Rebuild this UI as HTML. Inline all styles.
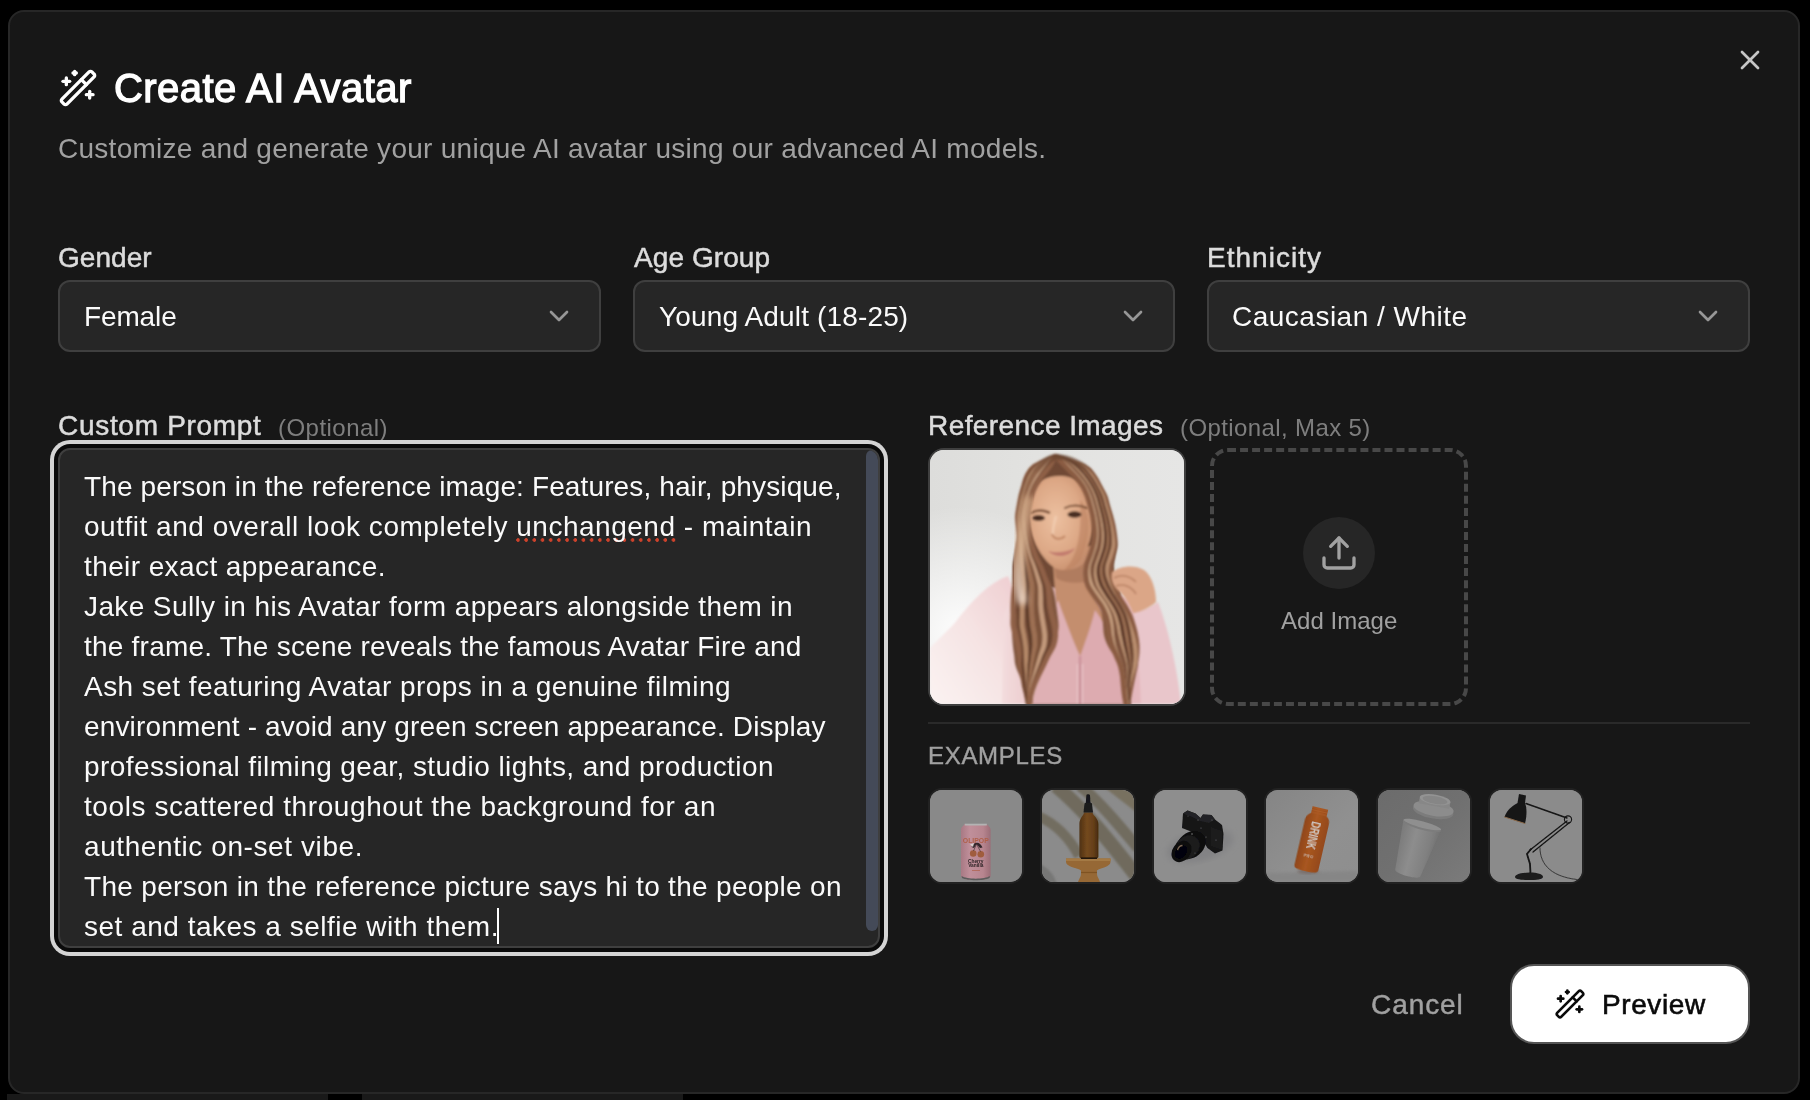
<!DOCTYPE html>
<html lang="en">
<head>
<meta charset="utf-8">
<title>Create AI Avatar</title>
<style>
*{box-sizing:border-box;margin:0;padding:0}
html,body{width:1810px;height:1100px;overflow:hidden;background:#000}
body{position:relative;font-family:"Liberation Sans",sans-serif;color:#fafafa;-webkit-font-smoothing:antialiased}
.abs{position:absolute}
.t{position:absolute;white-space:pre;line-height:40px;font-size:28px;will-change:transform}
.bgstrip{position:absolute;background:#191919}
#modal{position:absolute;left:8px;top:10px;width:1792px;height:1084px;background:#171717;border:2px solid #272727;border-radius:16px}
.title{left:114px;top:64px;font-size:40px;line-height:48px;font-weight:400;letter-spacing:0.45px;color:#fff;-webkit-text-stroke:1.3px #fff}
.sub{left:58px;top:129px;color:#a1a1a1;letter-spacing:0.272px}
.lbl{color:#dcdcdc;-webkit-text-stroke:0.5px #dcdcdc}
.opt{font-size:24px;line-height:32px;color:#7e7e7e}
.sel{position:absolute;top:280px;width:543px;height:72px;background:#262626;border:2px solid #3f3f3f;border-radius:12px}
.sel .t{left:24px;top:15px;color:#fafafa}
.sel svg{position:absolute;right:24px;top:18px;width:32px;height:32px}
#ta{position:absolute;left:58px;top:448px;width:822px;height:500px;background:#262626;border:2px solid #3f3f3f;border-radius:12px;box-shadow:0 0 0 4px #0a0a0a,0 0 0 8px #d4d4d4;overflow:hidden}
#ta .t{left:24px;color:#fafafa}
#thumb{position:absolute;left:806px;top:0;width:12px;height:481px;border-radius:6px;background:#444a58}
#spell{position:absolute;left:456px;top:88px;width:160px;height:4px;background:radial-gradient(circle at 2px 2px,#cf422b 1.5px,rgba(207,66,43,0) 2.1px) 0 0/8.2px 4px repeat-x}
#caret{position:absolute;left:437px;top:458px;width:2px;height:36px;background:#fff}
#photo{position:absolute;left:928px;top:448px;width:258px;height:258px;border:2px solid #3f3f3f;border-radius:16px;overflow:hidden;background:#e3e3e1}
#add{position:absolute;left:1210px;top:448px;width:258px;height:258px;border:4px dashed #484848;border-radius:18px}
#circ{position:absolute;left:1303px;top:517px;width:72px;height:72px;border-radius:50%;background:#262626}
#sep{position:absolute;left:928px;top:722px;width:822px;height:2px;background:#2a2a2a}
.ex{position:absolute;top:788px;width:96px;height:96px;border:2px solid #222;border-radius:14px;overflow:hidden;background:#8b8b8b}
.ex svg{display:block;width:92px;height:92px}
#prev{position:absolute;left:1510px;top:964px;width:240px;height:80px;background:#fff;border:2px solid #555;border-radius:24px}
</style>
</head>
<body>
<!-- faint page behind the dialog -->
<div class="bgstrip" style="left:7px;top:1094px;width:321px;height:6px"></div>
<div class="bgstrip" style="left:362px;top:1094px;width:321px;height:6px"></div>

<div id="modal"></div>

<!-- header -->
<svg class="abs" style="left:58px;top:68px;width:40px;height:40px" viewBox="0 0 24 24" fill="none" stroke="#fff" stroke-width="2" stroke-linecap="round" stroke-linejoin="round"><path d="m21.64 3.64-1.28-1.28a1.21 1.21 0 0 0-1.72 0L2.36 18.64a1.21 1.21 0 0 0 0 1.72l1.28 1.28a1.2 1.2 0 0 0 1.72 0L21.64 5.36a1.2 1.2 0 0 0 0-1.72"/><path d="m14 7 3 3"/><path d="M5 6v4"/><path d="M19 14v4"/><path d="M10 2v2"/><path d="M7 8H3"/><path d="M21 16h-4"/><path d="M11 3H9"/></svg>
<div class="t title">Create AI Avatar</div>
<div class="t sub">Customize and generate your unique AI avatar using our advanced AI models.</div>
<svg class="abs" style="left:1734px;top:44px;width:32px;height:32px" viewBox="0 0 24 24" fill="none" stroke="#c6c6c6" stroke-width="2" stroke-linecap="round" stroke-linejoin="round"><path d="M18 6 6 18"/><path d="m6 6 12 12"/></svg>

<!-- row 1 -->
<div class="t lbl" style="left:58px;top:238px;letter-spacing:0.04px">Gender</div>
<div class="t lbl" style="left:634px;top:238px;letter-spacing:0.08px">Age Group</div>
<div class="t lbl" style="left:1207px;top:238px;letter-spacing:1.02px">Ethnicity</div>

<div class="sel" style="left:58px"><div class="t" style="letter-spacing:-0.13px">Female</div><svg viewBox="0 0 24 24" fill="none" stroke="#979797" stroke-width="2" stroke-linecap="round" stroke-linejoin="round"><path d="m6 9 6 6 6-6"/></svg></div>
<div class="sel" style="left:633px;width:542px"><div class="t" style="letter-spacing:0.15px">Young Adult (18-25)</div><svg viewBox="0 0 24 24" fill="none" stroke="#979797" stroke-width="2" stroke-linecap="round" stroke-linejoin="round"><path d="m6 9 6 6 6-6"/></svg></div>
<div class="sel" style="left:1207px"><div class="t" style="letter-spacing:0.49px;margin-left:-1px">Caucasian / White</div><svg viewBox="0 0 24 24" fill="none" stroke="#979797" stroke-width="2" stroke-linecap="round" stroke-linejoin="round"><path d="m6 9 6 6 6-6"/></svg></div>

<!-- row 2 labels -->
<div class="t lbl" style="left:58px;top:406px;letter-spacing:0.7px">Custom Prompt</div>
<div class="t opt" style="left:277.5px;top:412px;letter-spacing:0.47px">(Optional)</div>
<div class="t lbl" style="left:928px;top:406px;letter-spacing:0.42px">Reference Images</div>
<div class="t opt" style="left:1179.5px;top:412px;letter-spacing:0.39px">(Optional, Max 5)</div>

<!-- textarea -->
<div id="ta">
<div id="spell"></div>
<div class="t" style="top:17px;letter-spacing:0.124px">The person in the reference image: Features, hair, physique,</div>
<div class="t" style="top:57px;letter-spacing:0.520px">outfit and overall look completely unchangend - maintain</div>
<div class="t" style="top:97px;letter-spacing:0.400px">their exact appearance.</div>
<div class="t" style="top:137px;letter-spacing:0.390px">Jake Sully in his Avatar form appears alongside them in</div>
<div class="t" style="top:177px;letter-spacing:0.220px">the frame. The scene reveals the famous Avatar Fire and</div>
<div class="t" style="top:217px;letter-spacing:0.457px">Ash set featuring Avatar props in a genuine filming</div>
<div class="t" style="top:257px;letter-spacing:0.153px">environment - avoid any green screen appearance. Display</div>
<div class="t" style="top:297px;letter-spacing:0.424px">professional filming gear, studio lights, and production</div>
<div class="t" style="top:337px;letter-spacing:0.586px">tools scattered throughout the background for an</div>
<div class="t" style="top:377px;letter-spacing:0.587px">authentic on-set vibe.</div>
<div class="t" style="top:417px;letter-spacing:0.308px">The person in the reference picture says hi to the people on</div>
<div class="t" style="top:457px;letter-spacing:0.50px">set and takes a selfie with them.</div>
<div id="caret"></div>
<div id="thumb"></div>
</div>

<!-- reference images -->
<div id="photo"><svg width="254" height="254" viewBox="0 0 254 254" style="display:block">
<defs>
<linearGradient id="pbg" x1="0" y1="0" x2="1" y2="0"><stop offset="0" stop-color="#dddddb"/><stop offset="0.5" stop-color="#e3e3e1"/><stop offset="1" stop-color="#e6e6e5"/></linearGradient>
<radialGradient id="pglow" cx="0.12" cy="0.72" r="0.5"><stop offset="0" stop-color="#fff" stop-opacity="0.95"/><stop offset="1" stop-color="#fff" stop-opacity="0"/></radialGradient>
<radialGradient id="pface" cx="0.42" cy="0.45" r="0.65"><stop offset="0" stop-color="#ecc0a0"/><stop offset="0.6" stop-color="#dda886"/><stop offset="1" stop-color="#c38b69"/></radialGradient>
<linearGradient id="parm" x1="1" y1="0" x2="0" y2="1"><stop offset="0" stop-color="#efcdd0"/><stop offset="0.45" stop-color="#f5e2e2"/><stop offset="1" stop-color="#fbf3f2"/></linearGradient>
<linearGradient id="pbody" x1="0" y1="0" x2="1" y2="0"><stop offset="0" stop-color="#f3dcdd"/><stop offset="0.5" stop-color="#dfadb1"/><stop offset="1" stop-color="#e6bcc2"/></linearGradient>
<linearGradient id="ptop" x1="0" y1="0" x2="0" y2="1"><stop offset="0" stop-color="#5e3c29" stop-opacity="0.75"/><stop offset="0.3" stop-color="#5e3c29" stop-opacity="0"/></linearGradient>
<filter id="pblur" x="-5%" y="-5%" width="110%" height="110%"><feGaussianBlur stdDeviation="0.9"/></filter>
<linearGradient id="phl" gradientUnits="userSpaceOnUse" x1="0" y1="45" x2="0" y2="155"><stop offset="0" stop-color="#cfa582"/><stop offset="0.5" stop-color="#e2bf9f"/><stop offset="1" stop-color="#f4e2d6"/></linearGradient><filter id="pblur3" x="-50%" y="-10%" width="200%" height="120%"><feGaussianBlur stdDeviation="3"/></filter><filter id="pblur2" x="-5%" y="-5%" width="110%" height="110%"><feGaussianBlur stdDeviation="0.9"/></filter>
</defs>
<rect width="254" height="254" fill="url(#pbg)"/>
<rect width="254" height="254" fill="url(#pglow)"/>
<g filter="url(#pblur)">
<path d="M78 126 C60 132 42 150 24 174 L0 198 L0 254 L84 254 L84 200 L88 150 Z" fill="url(#parm)"/>
<path d="M125 6.5 C121.4 8.2 108.2 13.1 103.3 16.4 C98.5 19.8 97.6 23.1 95.9 26.4 C94.1 29.7 93.9 33 93 36.3 C92.1 39.6 91 42.9 90.3 46.3 C89.5 49.6 89.1 52.9 88.5 56.2 C88 59.5 87.2 62.8 87.1 66.1 C86.9 69.5 87.4 72.8 87.6 76.1 C87.7 79.4 88.1 82.7 87.8 86 C87.6 89.3 86.7 92.6 86.1 96 C85.6 99.3 85 102.6 84.5 105.9 C84 109.2 83.3 112.5 83.1 115.8 C82.9 119.2 83 122.5 83.2 125.8 C83.5 129.1 84.2 132.4 84.5 135.7 C84.7 139 84.8 142.3 84.9 145.7 C84.9 149 84.8 152.3 84.6 155.6 C84.5 158.9 84.3 162.2 83.8 165.5 C83.3 168.9 82.1 172.2 81.8 175.5 C81.6 178.8 82 182.1 82.1 185.4 C82.3 188.7 82.6 192 82.9 195.4 C83.2 198.7 83.7 202 84.2 205.3 C84.6 208.6 84.6 211.9 85.5 215.2 C86.3 218.6 88 221.9 89.3 225.2 C90.6 228.5 91.8 231.8 93.3 235.1 C94.8 238.4 96.9 241.7 98.4 245.1 C99.8 248.4 101.4 253.3 102 255 L200 255 C200.3 253.3 201.2 248.4 201.8 245.1 C202.4 241.7 203 238.4 203.7 235.1 C204.3 231.8 205 228.5 205.7 225.2 C206.3 221.9 207.4 218.6 207.8 215.2 C208.1 211.9 208 208.6 207.8 205.3 C207.5 202 206.8 198.7 206.2 195.4 C205.5 192 204.5 188.7 203.7 185.4 C202.8 182.1 201.7 178.8 200.8 175.5 C199.9 172.2 199.3 168.9 198.4 165.5 C197.4 162.2 196.2 158.9 195 155.6 C193.8 152.3 192.2 149 191.1 145.7 C189.9 142.3 189.2 139 188.1 135.7 C187.1 132.4 185.5 129.1 184.7 125.8 C183.9 122.5 183.3 119.2 183.3 115.8 C183.4 112.5 184.5 109.2 185 105.9 C185.6 102.6 186.4 99.3 186.4 96 C186.4 92.6 185.5 89.3 185.1 86 C184.6 82.7 184.1 79.4 183.5 76.1 C182.9 72.8 182.2 69.5 181.4 66.1 C180.6 62.8 179.6 59.5 178.6 56.2 C177.7 52.9 177.2 49.6 175.9 46.3 C174.5 42.9 172.5 39.6 170.7 36.3 C168.9 33 167.7 29.7 165.2 26.4 C162.6 23.1 162 19.8 155.5 16.4 C149 13.1 131.1 8.2 126.2 6.5 Z" fill="#6f4934"/>
<path d="M72 254 L74 165 C80 142 100 136 125 138 L175 140 C198 145 212 158 220 172 L230 254 Z" fill="url(#pbody)"/>
<path d="M203 163 C212 160 222 156 228 152 C237 175 247 215 251 254 L211 254 C210 220 206 190 203 163 Z" fill="#e9c6cb"/>
<path d="M122 100 L162 96 L166 150 L176 168 L150 206 L126 156 Z" fill="#c48e6e"/><path d="M124 112 C134 124 150 122 162 104 L164 130 C150 134 136 134 126 128 Z" fill="#b07c5e"/>
<path d="M128 150 C134 167 143 190 150 207 L150 254 L100 254 C108 230 120 200 118 172 Z" fill="#dfb0b4"/>
<path d="M165 160 C161 177 154 195 150 207 L150 254 L200 254 C194 230 186 200 180 182 Z" fill="#ddabb0"/>
<path d="M150 206 L150 254" stroke="#c98f98" stroke-width="2.200" fill="none"/>
<path d="M147.500 214 L147.500 254 M152.500 214 L152.500 254" stroke="#ecc9cc" stroke-width="1" fill="none"/>
<path d="M100 46 C104 31 118 25 132 26 C150 27 162 40 163 62 C164 80 160 96 151 109 C144 119 134 122 127 119 C116 114 104 96 100 78 C98 66 98 56 100 46 Z" fill="url(#pface)"/>
<path d="M150 50 C160 60 162 84 151 109 C146 116 140 120 134 120 C148 108 152 80 150 50 Z" fill="#b97f5e" opacity="0.55"/><path d="M126 66 C124 74 122 80 123 86" stroke="#f3cfb4" stroke-width="2.400" fill="none" opacity="0.8"/>
<path d="M101 63 C106 60 113 60 119 62.500" stroke="#7a5137" stroke-width="2.600" fill="none" stroke-linecap="round"/>
<path d="M135 58 C141 54.500 150 54.500 157 58" stroke="#7a5137" stroke-width="2" fill="none" stroke-linecap="round"/>
<ellipse cx="108.500" cy="68" rx="6.500" ry="3" fill="#4a2e20"/>
<ellipse cx="144.500" cy="64.500" rx="7" ry="3.200" fill="#4a2e20"/>
<path d="M122 84 C124 90 131 90 135 86" stroke="#c08562" stroke-width="2" fill="none"/>
<path d="M118 101 C125 103.500 136 102.500 145 98 C140 107 126 109 118 101 Z" fill="#c27c6e"/>
</g>
<g filter="url(#pblur2)">
<path d="M125 6.5 C121.4 8.2 108.2 13.1 103.3 16.4 C98.5 19.8 97.6 23.1 95.9 26.4 C94.1 29.7 93.9 33 93 36.3 C92.1 39.6 91 42.9 90.3 46.3 C89.5 49.6 89.1 52.9 88.5 56.2 C88 59.5 87.2 62.8 87.1 66.1 C86.9 69.5 87.4 72.8 87.6 76.1 C87.7 79.4 88.1 82.7 87.8 86 C87.6 89.3 86.7 92.6 86.1 96 C85.6 99.3 85 102.6 84.5 105.9 C84 109.2 83.3 112.5 83.1 115.8 C82.9 119.2 83 122.5 83.2 125.8 C83.5 129.1 84.2 132.4 84.5 135.7 C84.7 139 84.8 142.3 84.9 145.7 C84.9 149 84.8 152.3 84.6 155.6 C84.5 158.9 84.3 162.2 83.8 165.5 C83.3 168.9 82.1 172.2 81.8 175.5 C81.6 178.8 82 182.1 82.1 185.4 C82.3 188.7 82.6 192 82.9 195.4 C83.2 198.7 83.7 202 84.2 205.3 C84.6 208.6 84.6 211.9 85.5 215.2 C86.3 218.6 88 221.9 89.3 225.2 C90.6 228.5 91.8 231.8 93.3 235.1 C94.8 238.4 96.9 241.7 98.4 245.1 C99.8 248.4 101.4 253.3 102 255 L102.5 255 C102.6 253.3 102.7 248.4 103 245.1 C103.3 241.7 103.7 238.4 104.4 235.1 C105.1 231.8 105.9 228.5 107 225.2 C108.1 221.9 109.6 218.6 111.1 215.2 C112.6 211.9 114 208.6 116 205.3 C118 202 121.2 198.7 123 195.4 C124.9 192 126.4 188.7 127.3 185.4 C128.2 182.1 128.5 178.8 128.6 175.5 C128.6 172.2 128 168.9 127.6 165.5 C127.2 162.2 126.7 158.9 126.2 155.6 C125.7 152.3 125.5 149 124.7 145.7 C124 142.3 123.3 139 121.8 135.7 C120.3 132.4 117.9 129.1 115.9 125.8 C114 122.5 112 119.2 110.1 115.8 C108.2 112.5 105.9 109.2 104.4 105.9 C103 102.6 102.1 99.3 101.2 96 C100.3 92.6 99.6 89.3 99.2 86 C98.8 82.7 98.7 79.4 98.6 76.1 C98.4 72.8 97.9 69.5 98.1 66.1 C98.2 62.8 98.8 59.5 99.5 56.2 C100.1 52.9 100.9 49.6 102 46.3 C103.1 42.9 104.2 39.6 106 36.3 C107.7 33 110.2 29.7 112.6 26.4 C115 23.1 118.4 19.8 120.5 16.4 C122.5 13.1 124.2 8.2 125 6.5 Z" fill="#805640"/>
<path d="M125 6.5 C121.5 8.2 109 13.1 104.3 16.4 C99.6 19.8 98.5 23.1 96.8 26.4 C95 29.7 94.7 33 93.7 36.3 C92.7 39.6 91.7 42.9 90.9 46.3 C90.2 49.6 89.7 52.9 89.1 56.2 C88.6 59.5 87.7 62.8 87.6 66.1 C87.4 69.5 88.1 72.8 88.4 76.1 C88.7 79.4 89.4 82.7 89.5 86 C89.6 89.3 89.1 92.6 88.8 96 C88.6 99.3 88.3 102.6 87.9 105.9 C87.5 109.2 86.8 112.5 86.3 115.8 C85.9 119.2 85.5 122.5 85.2 125.8 C84.9 129.1 84.8 132.4 84.6 135.7 C84.3 139 83.8 142.3 83.5 145.7 C83.3 149 83 152.3 83 155.6 C82.9 158.9 83 162.2 83.1 165.5 C83.1 168.9 82.7 172.2 83.1 175.5 C83.5 178.8 84.7 182.1 85.5 185.4 C86.3 188.7 87.2 192 88 195.4 C88.7 198.7 89.4 202 89.8 205.3 C90.3 208.6 90.2 211.9 90.6 215.2 C91.1 218.6 92.1 221.9 92.7 225.2 C93.3 228.5 93.6 231.8 94.3 235.1 C94.9 238.4 96.1 241.7 96.8 245.1 C97.5 248.4 98.3 253.3 98.6 255" stroke="#8f6046" stroke-width="5" fill="none" stroke-linecap="round"/>
<path d="M125 6.5 C121.9 8.2 110.6 13.1 106.2 16.4 C101.8 19.8 100.5 23.1 98.6 26.4 C96.8 29.7 96.2 33 95.2 36.3 C94.1 39.6 93 42.9 92.2 46.3 C91.4 49.6 90.9 52.9 90.4 56.2 C89.8 59.5 89 62.8 88.9 66.1 C88.8 69.5 89.5 72.8 89.8 76.1 C90.2 79.4 90.9 82.7 91 86 C91.1 89.3 90.7 92.6 90.5 96 C90.3 99.3 90.1 102.6 89.7 105.9 C89.4 109.2 88.8 112.5 88.5 115.8 C88.2 119.2 87.9 122.5 87.8 125.8 C87.7 129.1 87.8 132.4 87.8 135.7 C87.7 139 87.6 142.3 87.6 145.7 C87.6 149 87.7 152.3 87.9 155.6 C88.1 158.9 88.5 162.2 88.8 165.5 C89.1 168.9 89 172.2 89.4 175.5 C89.9 178.8 91 182.1 91.7 185.4 C92.3 188.7 92.8 192 93.1 195.4 C93.4 198.7 93.5 202 93.5 205.3 C93.4 208.6 92.9 211.9 92.9 215.2 C92.9 218.6 93.4 221.9 93.6 225.2 C93.9 228.5 93.8 231.8 94.3 235.1 C94.7 238.4 95.7 241.7 96.3 245.1 C97 248.4 97.9 253.3 98.2 255" stroke="#6e4733" stroke-width="4" fill="none" stroke-linecap="round"/>
<path d="M125 6.5 C122.2 8.2 112.2 13.1 108.1 16.4 C104 19.8 102.4 23.1 100.5 26.4 C98.6 29.7 97.8 33 96.6 36.3 C95.4 39.6 94.4 42.9 93.5 46.3 C92.7 49.6 92.2 52.9 91.6 56.2 C91 59.5 90.1 62.8 89.9 66.1 C89.7 69.5 90.2 72.8 90.5 76.1 C90.7 79.4 91.3 82.7 91.5 86 C91.8 89.3 91.7 92.6 91.9 96 C92.1 99.3 92.3 102.6 92.5 105.9 C92.7 109.2 92.9 112.5 93.2 115.8 C93.4 119.2 93.7 122.5 93.9 125.8 C94.1 129.1 94.5 132.4 94.4 135.7 C94.4 139 93.8 142.3 93.5 145.7 C93.1 149 92.6 152.3 92.4 155.6 C92.2 158.9 92.1 162.2 92.1 165.5 C92 168.9 91.8 172.2 92.1 175.5 C92.4 178.8 93.3 182.1 93.9 185.4 C94.5 188.7 95.1 192 95.5 195.4 C95.9 198.7 96 202 96.2 205.3 C96.4 208.6 96.3 211.9 96.6 215.2 C96.8 218.6 97.5 221.9 97.7 225.2 C98 228.5 98 231.8 98.3 235.1 C98.6 238.4 99.2 241.7 99.4 245.1 C99.6 248.4 99.7 253.3 99.8 255" stroke="#b48868" stroke-width="4.5" fill="none" stroke-linecap="round"/>
<path d="M125 6.5 C122.5 8.2 113.8 13.1 110 16.4 C106.2 19.8 104.4 23.1 102.4 26.4 C100.4 29.7 99.3 33 98 36.3 C96.8 39.6 95.7 42.9 94.8 46.3 C94 49.6 93.4 52.9 92.8 56.2 C92.2 59.5 91.3 62.8 91.2 66.1 C91.1 69.5 91.6 72.8 91.9 76.1 C92.3 79.4 92.8 82.7 93.2 86 C93.5 89.3 93.6 92.6 93.8 96 C94.1 99.3 94.3 102.6 94.6 105.9 C94.9 109.2 95.3 112.5 95.6 115.8 C95.9 119.2 96.2 122.5 96.5 125.8 C96.8 129.1 97.3 132.4 97.4 135.7 C97.5 139 97.2 142.3 97.1 145.7 C97 149 96.7 152.3 96.8 155.6 C96.9 158.9 97.2 162.2 97.4 165.5 C97.6 168.9 97.8 172.2 98.2 175.5 C98.7 178.8 99.6 182.1 100.1 185.4 C100.6 188.7 101 192 101 195.4 C101 198.7 100.6 202 100.3 205.3 C100 208.6 99.6 211.9 99.3 215.2 C99.1 218.6 99.1 221.9 99 225.2 C98.8 228.5 98.5 231.8 98.4 235.1 C98.4 238.4 98.7 241.7 98.7 245.1 C98.8 248.4 98.9 253.3 99 255" stroke="#5f3c2b" stroke-width="3.5" fill="none" stroke-linecap="round"/>
<path d="M125 6.5 C122.8 8.2 115.4 13.1 111.9 16.4 C108.4 19.8 106.3 23.1 104.2 26.4 C102.2 29.7 100.8 33 99.5 36.3 C98.1 39.6 97.1 42.9 96.1 46.3 C95.2 49.6 94.6 52.9 94 56.2 C93.4 59.5 92.5 62.8 92.4 66.1 C92.2 69.5 92.7 72.8 93 76.1 C93.3 79.4 93.8 82.7 94.2 86 C94.6 89.3 94.9 92.6 95.4 96 C95.8 99.3 96.3 102.6 96.9 105.9 C97.5 109.2 98.3 112.5 98.9 115.8 C99.5 119.2 100.1 122.5 100.7 125.8 C101.2 129.1 101.9 132.4 102.2 135.7 C102.4 139 102 142.3 101.9 145.7 C101.8 149 101.5 152.3 101.5 155.6 C101.5 158.9 101.8 162.2 102 165.5 C102.2 168.9 102.5 172.2 102.9 175.5 C103.3 178.8 104.2 182.1 104.5 185.4 C104.8 188.7 105.1 192 104.9 195.4 C104.8 198.7 104.1 202 103.6 205.3 C103.2 208.6 102.7 211.9 102.3 215.2 C101.9 218.6 101.7 221.9 101.4 225.2 C101 228.5 100.5 231.8 100.2 235.1 C100 238.4 100 241.7 99.9 245.1 C99.7 248.4 99.5 253.3 99.4 255" stroke="#9d6f52" stroke-width="5" fill="none" stroke-linecap="round"/>
<path d="M125 6.5 C123.1 8.2 117 13.1 113.8 16.4 C110.7 19.8 108.2 23.1 106.1 26.4 C103.9 29.7 102.4 33 100.9 36.3 C99.5 39.6 98.4 42.9 97.4 46.3 C96.5 49.6 95.9 52.9 95.2 56.2 C94.6 59.5 93.8 62.8 93.6 66.1 C93.4 69.5 93.9 72.8 94.2 76.1 C94.5 79.4 95 82.7 95.4 86 C95.9 89.3 96.4 92.6 97 96 C97.6 99.3 98.3 102.6 99.1 105.9 C100 109.2 101.1 112.5 102 115.8 C102.9 119.2 103.7 122.5 104.5 125.8 C105.2 129.1 106.2 132.4 106.5 135.7 C106.8 139 106.5 142.3 106.5 145.7 C106.4 149 106.1 152.3 106.1 155.6 C106.2 158.9 106.5 162.2 106.8 165.5 C107.1 168.9 107.5 172.2 107.9 175.5 C108.3 178.8 109.1 182.1 109.3 185.4 C109.5 188.7 109.6 192 109.2 195.4 C108.8 198.7 107.7 202 107 205.3 C106.4 208.6 105.7 211.9 105.1 215.2 C104.5 218.6 104 221.9 103.4 225.2 C102.9 228.5 102.2 231.8 101.7 235.1 C101.2 238.4 100.9 241.7 100.6 245.1 C100.3 248.4 99.8 253.3 99.6 255" stroke="#7c523b" stroke-width="4" fill="none" stroke-linecap="round"/>
<path d="M125 6.5 C123.5 8.2 118.6 13.1 115.7 16.4 C112.9 19.8 110.2 23.1 107.9 26.4 C105.7 29.7 103.9 33 102.4 36.3 C100.8 39.6 99.7 42.9 98.7 46.3 C97.8 49.6 97.1 52.9 96.4 56.2 C95.8 59.5 95 62.8 94.8 66.1 C94.7 69.5 95.2 72.8 95.5 76.1 C95.8 79.4 96.3 82.7 96.8 86 C97.4 89.3 98 92.6 98.8 96 C99.5 99.3 100.3 102.6 101.3 105.9 C102.3 109.2 103.8 112.5 104.8 115.8 C105.9 119.2 106.9 122.5 107.8 125.8 C108.7 129.1 109.8 132.4 110.3 135.7 C110.8 139 110.6 142.3 110.6 145.7 C110.7 149 110.5 152.3 110.7 155.6 C110.9 158.9 111.3 162.2 111.8 165.5 C112.2 168.9 112.9 172.2 113.4 175.5 C113.9 178.8 114.6 182.1 114.7 185.4 C114.8 188.7 114.7 192 114 195.4 C113.3 198.7 111.8 202 110.8 205.3 C109.8 208.6 108.9 211.9 108 215.2 C107 218.6 106.1 221.9 105.2 225.2 C104.3 228.5 103.3 231.8 102.6 235.1 C101.8 238.4 101.3 241.7 100.7 245.1 C100.2 248.4 99.7 253.3 99.4 255" stroke="#c39a7b" stroke-width="4.5" fill="none" stroke-linecap="round"/>
<path d="M125 6.5 C123.8 8.2 120.2 13.1 117.6 16.4 C115.1 19.8 112.1 23.1 109.8 26.4 C107.5 29.7 105.4 33 103.8 36.3 C102.2 39.6 101.1 42.9 100 46.3 C99 49.6 98.3 52.9 97.6 56.2 C97 59.5 96.2 62.8 96.1 66.1 C96 69.5 96.5 72.8 96.9 76.1 C97.2 79.4 97.6 82.7 98.3 86 C98.9 89.3 99.7 92.6 100.5 96 C101.4 99.3 102.3 102.6 103.4 105.9 C104.6 109.2 106.3 112.5 107.5 115.8 C108.8 119.2 109.8 122.5 110.9 125.8 C112 129.1 113.2 132.4 113.9 135.7 C114.5 139 114.5 142.3 114.7 145.7 C114.9 149 114.9 152.3 115.3 155.6 C115.6 158.9 116.3 162.2 117 165.5 C117.6 168.9 118.6 172.2 119.2 175.5 C119.7 178.8 120.4 182.1 120.3 185.4 C120.3 188.7 119.9 192 119 195.4 C118 198.7 115.9 202 114.5 205.3 C113.1 208.6 112 211.9 110.7 215.2 C109.4 218.6 108 221.9 106.7 225.2 C105.5 228.5 104.2 231.8 103.2 235.1 C102.2 238.4 101.3 241.7 100.7 245.1 C100 248.4 99.4 253.3 99.1 255" stroke="#6b4531" stroke-width="3.5" fill="none" stroke-linecap="round"/>
<path d="M125 6.5 C124.1 8.2 121.8 13.1 119.5 16.4 C117.3 19.8 114 23.1 111.7 26.4 C109.3 29.7 107 33 105.3 36.3 C103.5 39.6 102.4 42.9 101.3 46.3 C100.3 49.6 99.5 52.9 98.9 56.2 C98.2 59.5 97.5 62.8 97.3 66.1 C97.2 69.5 97.8 72.8 98.1 76.1 C98.5 79.4 98.9 82.7 99.6 86 C100.2 89.3 101.2 92.6 102.2 96 C103.2 99.3 104.3 102.6 105.6 105.9 C107 109.2 108.9 112.5 110.4 115.8 C111.8 119.2 113.1 122.5 114.3 125.8 C115.6 129.1 117 132.4 117.8 135.7 C118.6 139 118.7 142.3 119 145.7 C119.4 149 119.4 152.3 119.9 155.6 C120.4 158.9 121.2 162.2 121.9 165.5 C122.7 168.9 123.9 172.2 124.5 175.5 C125.1 178.8 125.7 182.1 125.6 185.4 C125.4 188.7 124.8 192 123.6 195.4 C122.3 198.7 119.8 202 118.1 205.3 C116.4 208.6 115.1 211.9 113.5 215.2 C111.9 218.6 110.1 221.9 108.5 225.2 C107 228.5 105.5 231.8 104.2 235.1 C102.9 238.4 101.8 241.7 101 245.1 C100.1 248.4 99.4 253.3 99 255" stroke="#8f6046" stroke-width="5" fill="none" stroke-linecap="round"/>
<path d="M126.2 6.5 C131.1 8.2 149 13.1 155.5 16.4 C162 19.8 162.6 23.1 165.2 26.4 C167.7 29.7 168.9 33 170.7 36.3 C172.5 39.6 174.5 42.9 175.9 46.3 C177.2 49.6 177.7 52.9 178.6 56.2 C179.6 59.5 180.6 62.8 181.4 66.1 C182.2 69.5 182.9 72.8 183.5 76.1 C184.1 79.4 184.6 82.7 185.1 86 C185.5 89.3 186.4 92.6 186.4 96 C186.4 99.3 185.6 102.6 185 105.9 C184.5 109.2 183.4 112.5 183.3 115.8 C183.3 119.2 183.9 122.5 184.7 125.8 C185.5 129.1 187.1 132.4 188.1 135.7 C189.2 139 189.9 142.3 191.1 145.7 C192.2 149 193.8 152.3 195 155.6 C196.2 158.9 197.4 162.2 198.4 165.5 C199.3 168.9 199.9 172.2 200.8 175.5 C201.7 178.8 202.8 182.1 203.7 185.4 C204.5 188.7 205.5 192 206.2 195.4 C206.8 198.7 207.5 202 207.8 205.3 C208 208.6 208.1 211.9 207.8 215.2 C207.4 218.6 206.3 221.9 205.7 225.2 C205 228.5 204.3 231.8 203.7 235.1 C203 238.4 202.4 241.7 201.8 245.1 C201.2 248.4 200.3 253.3 200 255 L198 255 C197.9 253.3 197.8 248.4 197.6 245.1 C197.5 241.7 197.4 238.4 196.9 235.1 C196.5 231.8 196 228.5 195 225.2 C194 221.9 192.7 218.6 190.8 215.2 C189 211.9 186.2 208.6 184 205.3 C181.8 202 179.4 198.7 177.8 195.4 C176.1 192 174.8 188.7 174.1 185.4 C173.3 182.1 173.4 178.8 173.1 175.5 C172.8 172.2 172.7 168.9 172.1 165.5 C171.5 162.2 170.6 158.9 169.4 155.6 C168.1 152.3 166.1 149 164.5 145.7 C163 142.3 161 139 159.9 135.7 C158.7 132.4 158.3 129.1 157.9 125.8 C157.5 122.5 157.3 119.2 157.5 115.8 C157.7 112.5 158.7 109.2 159.3 105.9 C160 102.6 160.8 99.3 161.3 96 C161.8 92.6 162.3 89.3 162.4 86 C162.5 82.7 162.3 79.4 162.2 76.1 C162 72.8 161.7 69.5 161.2 66.1 C160.7 62.8 160.1 59.5 159.2 56.2 C158.4 52.9 157.5 49.6 156.3 46.3 C155 42.9 153.8 39.6 151.7 36.3 C149.7 33 146.8 29.7 143.9 26.4 C140.9 23.1 137.1 19.8 134.2 16.4 C131.2 13.1 127.6 8.2 126.2 6.5 Z" fill="#84593f"/>
<path d="M126.2 6.5 C130.9 8.2 148 13.1 154.3 16.4 C160.6 19.8 161.4 23.1 164 26.4 C166.5 29.7 167.8 33 169.6 36.3 C171.4 39.6 173.4 42.9 174.8 46.3 C176.1 49.6 176.6 52.9 177.6 56.2 C178.5 59.5 179.7 62.8 180.6 66.1 C181.5 69.5 182.4 72.8 183.1 76.1 C183.7 79.4 184.3 82.7 184.6 86 C184.9 89.3 185.4 92.6 185 96 C184.7 99.3 183.3 102.6 182.4 105.9 C181.4 109.2 179.7 112.5 179.2 115.8 C178.8 119.2 179 122.5 179.7 125.8 C180.4 129.1 182 132.4 183.4 135.7 C184.8 139 186.4 142.3 188.3 145.7 C190.1 149 192.6 152.3 194.5 155.6 C196.4 158.9 198.3 162.2 199.8 165.5 C201.2 168.9 202.2 172.2 203.2 175.5 C204.2 178.8 205.1 182.1 205.7 185.4 C206.4 188.7 206.8 192 207 195.4 C207.1 198.7 207.1 202 206.7 205.3 C206.4 208.6 205.8 211.9 204.9 215.2 C204 218.6 202.5 221.9 201.6 225.2 C200.6 228.5 199.8 231.8 199.3 235.1 C198.7 238.4 198.5 241.7 198.3 245.1 C198.2 248.4 198.4 253.3 198.4 255" stroke="#8a5c43" stroke-width="5" fill="none" stroke-linecap="round"/>
<path d="M126.2 6.5 C130.5 8.2 146 13.1 151.9 16.4 C157.8 19.8 159 23.1 161.6 26.4 C164.2 29.7 165.7 33 167.5 36.3 C169.4 39.6 171.3 42.9 172.6 46.3 C173.9 49.6 174.4 52.9 175.4 56.2 C176.4 59.5 177.4 62.8 178.3 66.1 C179.2 69.5 180.1 72.8 180.8 76.1 C181.5 79.4 182.1 82.7 182.5 86 C182.8 89.3 183.4 92.6 183 96 C182.7 99.3 181.4 102.6 180.5 105.9 C179.5 109.2 177.7 112.5 177.1 115.8 C176.5 119.2 176.4 122.5 176.9 125.8 C177.3 129.1 178.4 132.4 179.5 135.7 C180.7 139 182.2 142.3 183.9 145.7 C185.7 149 188.1 152.3 190 155.6 C191.9 158.9 193.9 162.2 195.5 165.5 C197.1 168.9 198.3 172.2 199.5 175.5 C200.7 178.8 201.8 182.1 202.7 185.4 C203.6 188.7 204.4 192 204.9 195.4 C205.4 198.7 205.7 202 205.6 205.3 C205.6 208.6 205.3 211.9 204.6 215.2 C203.9 218.6 202.4 221.9 201.4 225.2 C200.5 228.5 199.5 231.8 198.8 235.1 C198.1 238.4 197.5 241.7 197.2 245.1 C196.9 248.4 196.9 253.3 196.9 255" stroke="#b98e6e" stroke-width="4" fill="none" stroke-linecap="round"/>
<path d="M126.2 6.5 C130.1 8.2 144.1 13.1 149.6 16.4 C155.1 19.8 156.6 23.1 159.2 26.4 C161.9 29.7 163.6 33 165.4 36.3 C167.3 39.6 169.1 42.9 170.4 46.3 C171.7 49.6 172.3 52.9 173.2 56.2 C174.2 59.5 175.3 62.8 176.1 66.1 C177 69.5 177.8 72.8 178.3 76.1 C178.8 79.4 179.3 82.7 179.4 86 C179.6 89.3 179.8 92.6 179.3 96 C178.8 99.3 177.4 102.6 176.4 105.9 C175.4 109.2 173.8 112.5 173.4 115.8 C172.9 119.2 173.1 122.5 173.8 125.8 C174.5 129.1 175.9 132.4 177.4 135.7 C178.9 139 180.9 142.3 182.8 145.7 C184.8 149 187.3 152.3 189.2 155.6 C191.1 158.9 192.9 162.2 194.2 165.5 C195.6 168.9 196.3 172.2 197.1 175.5 C197.9 178.8 198.5 182.1 199 185.4 C199.5 188.7 199.9 192 200.3 195.4 C200.6 198.7 200.9 202 201 205.3 C201.1 208.6 201.1 211.9 200.7 215.2 C200.4 218.6 199.5 221.9 199 225.2 C198.5 228.5 198.1 231.8 197.8 235.1 C197.6 238.4 197.6 241.7 197.7 245.1 C197.8 248.4 198.3 253.3 198.4 255" stroke="#6b4531" stroke-width="4.5" fill="none" stroke-linecap="round"/>
<path d="M126.2 6.5 C129.7 8.2 142.1 13.1 147.2 16.4 C152.3 19.8 154.2 23.1 156.9 26.4 C159.6 29.7 161.4 33 163.3 36.3 C165.2 39.6 166.9 42.9 168.2 46.3 C169.5 49.6 170.2 52.9 171.1 56.2 C172 59.5 173.1 62.8 173.9 66.1 C174.7 69.5 175.4 72.8 176 76.1 C176.5 79.4 176.9 82.7 177 86 C177.2 89.3 177.2 92.6 176.7 96 C176.2 99.3 174.8 102.6 173.8 105.9 C172.8 109.2 171.1 112.5 170.6 115.8 C170.1 119.2 170.2 122.5 170.8 125.8 C171.3 129.1 172.5 132.4 174 135.7 C175.4 139 177.4 142.3 179.4 145.7 C181.4 149 184 152.3 185.9 155.6 C187.9 158.9 189.7 162.2 191 165.5 C192.4 168.9 193.1 172.2 193.9 175.5 C194.8 178.8 195.3 182.1 195.9 185.4 C196.5 188.7 197 192 197.5 195.4 C198 198.7 198.5 202 198.8 205.3 C199.1 208.6 199.4 211.9 199.3 215.2 C199.1 218.6 198.4 221.9 198 225.2 C197.6 228.5 197.2 231.8 197 235.1 C196.9 238.4 196.8 241.7 196.9 245.1 C197.1 248.4 197.6 253.3 197.8 255" stroke="#a37658" stroke-width="3.5" fill="none" stroke-linecap="round"/>
<path d="M126.2 6.5 C129.3 8.2 140.1 13.1 144.8 16.4 C149.5 19.8 151.8 23.1 154.5 26.4 C157.2 29.7 159.3 33 161.2 36.3 C163.1 39.6 164.8 42.9 166.1 46.3 C167.4 49.6 168 52.9 168.9 56.2 C169.9 59.5 170.9 62.8 171.6 66.1 C172.4 69.5 173.1 72.8 173.6 76.1 C174.1 79.4 174.5 82.7 174.5 86 C174.6 89.3 174.5 92.6 173.9 96 C173.3 99.3 172 102.6 171 105.9 C169.9 109.2 168.3 112.5 167.8 115.8 C167.2 119.2 167.3 122.5 167.8 125.8 C168.3 129.1 169.4 132.4 170.8 135.7 C172.3 139 174.4 142.3 176.4 145.7 C178.5 149 181.1 152.3 183 155.6 C185 158.9 186.8 162.2 188.1 165.5 C189.4 168.9 190.1 172.2 190.9 175.5 C191.6 178.8 192 182.1 192.6 185.4 C193.2 188.7 193.8 192 194.4 195.4 C195 198.7 195.7 202 196.2 205.3 C196.7 208.6 197.3 211.9 197.4 215.2 C197.5 218.6 197 221.9 196.9 225.2 C196.7 228.5 196.4 231.8 196.3 235.1 C196.2 238.4 196.2 241.7 196.4 245.1 C196.6 248.4 197.3 253.3 197.5 255" stroke="#5e3b2a" stroke-width="5" fill="none" stroke-linecap="round"/>
<path d="M126.2 6.5 C128.9 8.2 138.1 13.1 142.4 16.4 C146.8 19.8 149.4 23.1 152.2 26.4 C154.9 29.7 157.2 33 159.1 36.3 C161.1 39.6 162.6 42.9 163.9 46.3 C165.2 49.6 165.9 52.9 166.8 56.2 C167.7 59.5 168.6 62.8 169.4 66.1 C170.1 69.5 170.8 72.8 171.3 76.1 C171.7 79.4 172.1 82.7 172.1 86 C172.1 89.3 172 92.6 171.3 96 C170.7 99.3 169.4 102.6 168.3 105.9 C167.3 109.2 165.6 112.5 165 115.8 C164.5 119.2 164.4 122.5 164.8 125.8 C165.2 129.1 166.1 132.4 167.5 135.7 C168.9 139 171.1 142.3 173.2 145.7 C175.2 149 177.9 152.3 179.8 155.6 C181.8 158.9 183.6 162.2 184.9 165.5 C186.2 168.9 186.9 172.2 187.7 175.5 C188.4 178.8 188.8 182.1 189.4 185.4 C190.1 188.7 190.8 192 191.5 195.4 C192.3 198.7 193.2 202 193.9 205.3 C194.7 208.6 195.6 211.9 195.9 215.2 C196.2 218.6 195.9 221.9 195.9 225.2 C195.8 228.5 195.6 231.8 195.5 235.1 C195.5 238.4 195.6 241.7 195.8 245.1 C196 248.4 196.8 253.3 196.9 255" stroke="#bd9474" stroke-width="4" fill="none" stroke-linecap="round"/>
<path d="M126.2 6.5 C128.6 8.2 136.2 13.1 140.1 16.4 C144 19.8 147 23.1 149.8 26.4 C152.6 29.7 155 33 157 36.3 C159 39.6 160.5 42.9 161.7 46.3 C163 49.6 163.7 52.9 164.6 56.2 C165.5 59.5 166.4 62.8 167.1 66.1 C167.9 69.5 168.5 72.8 168.9 76.1 C169.4 79.4 169.7 82.7 169.7 86 C169.7 89.3 169.4 92.6 168.8 96 C168.1 99.3 166.8 102.6 165.7 105.9 C164.7 109.2 163 112.5 162.4 115.8 C161.7 119.2 161.6 122.5 161.8 125.8 C162.1 129.1 162.8 132.4 164.1 135.7 C165.4 139 167.7 142.3 169.8 145.7 C171.8 149 174.5 152.3 176.5 155.6 C178.5 158.9 180.2 162.2 181.6 165.5 C182.9 168.9 183.6 172.2 184.4 175.5 C185.2 178.8 185.5 182.1 186.2 185.4 C187 188.7 187.8 192 188.7 195.4 C189.6 198.7 190.8 202 191.8 205.3 C192.7 208.6 193.9 211.9 194.5 215.2 C195 218.6 194.9 221.9 195 225.2 C195 228.5 194.8 231.8 194.8 235.1 C194.9 238.4 194.9 241.7 195.1 245.1 C195.3 248.4 196.1 253.3 196.3 255" stroke="#7d533c" stroke-width="4.5" fill="none" stroke-linecap="round"/>
<path d="M126.2 6.5 C128.2 8.2 134.2 13.1 137.7 16.4 C141.2 19.8 144.6 23.1 147.4 26.4 C150.3 29.7 152.9 33 154.9 36.3 C156.9 39.6 158.3 42.9 159.6 46.3 C160.8 49.6 161.6 52.9 162.5 56.2 C163.4 59.5 164.3 62.8 164.9 66.1 C165.6 69.5 166.1 72.8 166.4 76.1 C166.7 79.4 166.9 82.7 166.7 86 C166.5 89.3 166 92.6 165.2 96 C164.4 99.3 163 102.6 162 105.9 C161 109.2 159.4 112.5 158.9 115.8 C158.4 119.2 158.5 122.5 159 125.8 C159.5 129.1 160.4 132.4 161.9 135.7 C163.5 139 166.1 142.3 168.4 145.7 C170.6 149 173.4 152.3 175.3 155.6 C177.2 158.9 178.7 162.2 179.8 165.5 C180.9 168.9 181.3 172.2 181.7 175.5 C182.1 178.8 182 182.1 182.4 185.4 C182.8 188.7 183.4 192 184.2 195.4 C185.1 198.7 186.4 202 187.5 205.3 C188.6 208.6 190.2 211.9 191.1 215.2 C192 218.6 192.5 221.9 193 225.2 C193.5 228.5 193.7 231.8 194.2 235.1 C194.6 238.4 195 241.7 195.6 245.1 C196.2 248.4 197.3 253.3 197.6 255" stroke="#c7a080" stroke-width="3.5" fill="none" stroke-linecap="round"/>
<path d="M126.2 6.5 C127.8 8.2 132.2 13.1 135.3 16.4 C138.5 19.8 142.2 23.1 145.1 26.4 C148 29.7 150.7 33 152.8 36.3 C154.9 39.6 156.1 42.9 157.4 46.3 C158.6 49.6 159.4 52.9 160.3 56.2 C161.2 59.5 162 62.8 162.7 66.1 C163.3 69.5 163.8 72.8 164.2 76.1 C164.5 79.4 164.8 82.7 164.6 86 C164.4 89.3 163.8 92.6 163 96 C162.2 99.3 160.9 102.6 159.8 105.9 C158.7 109.2 157.1 112.5 156.5 115.8 C155.8 119.2 155.6 122.5 155.9 125.8 C156.1 129.1 156.6 132.4 158 135.7 C159.4 139 162 142.3 164.2 145.7 C166.4 149 169.2 152.3 171.2 155.6 C173.2 158.9 174.8 162.2 176 165.5 C177.2 168.9 177.8 172.2 178.4 175.5 C179 178.8 179 182.1 179.6 185.4 C180.2 188.7 181 192 182.1 195.4 C183.2 198.7 184.8 202 186.1 205.3 C187.5 208.6 189.3 211.9 190.3 215.2 C191.4 218.6 191.9 221.9 192.4 225.2 C192.9 228.5 193 231.8 193.3 235.1 C193.6 238.4 193.9 241.7 194.4 245.1 C194.8 248.4 195.9 253.3 196.2 255" stroke="#8a5c43" stroke-width="5" fill="none" stroke-linecap="round"/>
<path d="M125 4 C100 8 92 40 90 70 L100 60 C104 30 118 14 126 10 L134 10 C150 16 160 34 164 60 L182 70 C176 30 160 6 125 4 Z" fill="url(#ptop)"/>
</g>
<path d="M98 50 C92 70 92 90 90 105 C88 120 88 135 92 150" stroke="url(#phl)" stroke-width="10" fill="none" stroke-linecap="round" opacity="0.85" filter="url(#pblur3)"/>
<g filter="url(#pblur)">
<path d="M182 122 C190 116 204 114 214 120 C222 126 226 140 226 152 C220 158 210 162 203 163 C200 155 196 148 190 142 C184 138 180 130 182 122 Z" fill="#dba687"/>
<path d="M184 128 C192 124 200 126 206 132 M186 136 C194 133 202 137 206 144" stroke="#b98264" stroke-width="1.600" fill="none"/>
</g>
</svg></div>
<div id="add"></div>
<div id="circ"></div>
<svg class="abs" style="left:1319px;top:533px;width:40px;height:40px" viewBox="0 0 24 24" fill="none" stroke="#a1a1a1" stroke-width="2" stroke-linecap="round" stroke-linejoin="round"><path d="M21 15v4a2 2 0 0 1-2 2H5a2 2 0 0 1-2-2v-4"/><path d="m17 8-5-5-5 5"/><path d="M12 3v12"/></svg>
<div class="t" style="left:1281px;top:605px;font-size:24px;line-height:32px;color:#a1a1a1;letter-spacing:0.03px">Add Image</div>

<div id="sep"></div>
<div class="t" style="left:927.5px;top:740px;font-size:24px;line-height:32px;color:#a1a1a1;letter-spacing:0.7px;-webkit-text-stroke:0.4px #a1a1a1">EXAMPLES</div>

<div class="ex" style="left:928px"><svg viewBox="0 0 92 92"><defs><linearGradient id="can" x1="0" y1="0" x2="1" y2="0"><stop offset="0" stop-color="#a87984"/><stop offset="0.3" stop-color="#c08f9a"/><stop offset="0.75" stop-color="#b7858f"/><stop offset="1" stop-color="#9b6d77"/></linearGradient><filter id="b1"><feGaussianBlur stdDeviation="0.35"/></filter></defs><rect width="92" height="92" fill="#898989"/><g filter="url(#b1)"><path d="M31 40 C31 36.500 34 36 34.500 34 L57 34 C57.500 36 60.600 36.500 60.600 40 L60.600 86 C60.600 88.500 55 90 45.800 90 C36.500 90 31 88.500 31 86 Z" fill="url(#can)"/><path d="M34.800 34.600 L56.800 34.600" stroke="#b3b3b3" stroke-width="1.800"/><path d="M31.500 86 C37 89.500 54.500 89.500 60 86 L59.500 88 C54 91 37.500 91 32 88 Z" fill="#5c5c5c"/><path d="M41.500 57 C44 51.500 50 51 52.500 57.500 L50 58 L46.500 54 L44 58 Z" fill="#33262a"/><path d="M40 54.500 L44 53 L43 57 Z" fill="#d8cfd0"/><circle cx="43.200" cy="63.500" r="3.300" fill="#a05c3c"/><circle cx="50.800" cy="64.200" r="3.300" fill="#a05c3c"/><path d="M46.500 54 L43.500 61 M46.500 54 L50.500 61.500" stroke="#33262a" stroke-width="0.600" fill="none"/><text x="45.800" y="52.500" font-family="Liberation Sans, sans-serif" font-size="6.400" font-weight="700" fill="#b0604a" text-anchor="middle" textLength="26" lengthAdjust="spacingAndGlyphs">OLIPOP</text><text x="45.800" y="72.500" font-family="Liberation Sans, sans-serif" font-size="4.800" font-weight="700" fill="#2e2326" text-anchor="middle">Cherry</text><text x="45.800" y="77.200" font-family="Liberation Sans, sans-serif" font-size="4.800" font-weight="700" fill="#2e2326" text-anchor="middle">Vanilla</text><path d="M42 80.500 L50 80.500" stroke="#b0604a" stroke-width="0.700"/></g></svg></div>
<div class="ex" style="left:1040px"><svg viewBox="0 0 92 92"><defs><linearGradient id="amb" x1="0" y1="0" x2="1" y2="0"><stop offset="0" stop-color="#4f3110"/><stop offset="0.4" stop-color="#74491e"/><stop offset="0.75" stop-color="#653f19"/><stop offset="1" stop-color="#462a0d"/></linearGradient><filter id="b2"><feGaussianBlur stdDeviation="0.45"/></filter><filter id="b2s"><feGaussianBlur stdDeviation="1.100"/></filter></defs><rect width="92" height="92" fill="#8b8b8b"/><g filter="url(#b2s)" fill="none" stroke-linecap="butt"><path d="M63 -2 L94 -2 L94 22 Z" fill="#787160" stroke="none"/><path d="M14 -4 C40 18 62 44 96 88" stroke="#6f6a5d" stroke-width="14"/><path d="M38 -4 C56 10 76 34 96 58" stroke="#716c5f" stroke-width="11"/><path d="M-4 26 C12 33 27 47 37 66" stroke="#726d60" stroke-width="10"/><path d="M-2 74 C6 78 12 84 15 94 L-2 94 Z" fill="#777776" stroke="none"/></g><g filter="url(#b2)"><path d="M24 68.500 L68.500 68.500 L68.500 72 C68.500 77 58 78 55 80.500 L55 84 C55 87 57 88.500 58 92 L36 92 C37 88.500 39 87 39 84 L39 80.500 C36 78 24 77 24 72 Z" fill="#966836"/><path d="M24 68.500 L68.500 68.500 L68.500 71 L24 71 Z" fill="#a47a45"/><path d="M39 82.500 L55 82.500" stroke="#7f5220" stroke-width="1.200"/><path d="M37.400 34 C37.400 28 41.500 26 42 22.500 L50.500 22.500 C51 26 56.400 28 56.400 34 L56.400 66.500 C56.400 68.500 54 69 47 69 C40 69 37.400 68.500 37.400 66.500 Z" fill="url(#amb)"/><path d="M39 68.200 L55 68.200" stroke="#24160a" stroke-width="1.600"/><path d="M42.500 13.500 C42.500 12 50 12 50 13.500 L51 22.500 L41.500 22.500 Z" fill="#1b1b1d"/><path d="M44.300 5.500 C44.300 3.800 48 3.800 48 5.500 L48.500 13 L43.800 13 Z" fill="#18181a"/></g></svg></div>
<div class="ex" style="left:1152px"><svg viewBox="0 0 92 92"><defs><filter id="b3"><feGaussianBlur stdDeviation="0.5"/></filter><filter id="b3s"><feGaussianBlur stdDeviation="3"/></filter></defs><rect width="92" height="92" fill="#8e8e8e"/><ellipse cx="46" cy="56" rx="34" ry="15" fill="#828284" filter="url(#b3s)" transform="rotate(-15 46 56)"/><g filter="url(#b3)"><path d="M29 23.500 L33.500 20.500 L41.500 23.500 L46.500 28 L49 24.500 L57.500 25 L61 29.500 L68 35 L69.500 44 L68.500 60.500 L61 63.500 L53.500 58 L49 51 L37 41.500 L28 38 Z" fill="#141415"/><path d="M29 23.500 L33.500 20.500 L41.500 23.500 L46.500 28 L49 24.500 L57.500 25 L61 29.500 L55 33 L46 31 L38 27 Z" fill="#232325"/><path d="M57 37 L68.500 41 L68 60 L57 56 Z" fill="#1c1c1e"/><ellipse cx="37" cy="55" rx="16" ry="12.500" fill="#101011" transform="rotate(-40 37 55)"/><ellipse cx="33" cy="57.500" rx="13.500" ry="11" fill="#1a1a1c" transform="rotate(-40 33 57.500)"/><ellipse cx="27.500" cy="61.500" rx="11.500" ry="9" fill="#0e0e10" transform="rotate(-52 27.500 61.500)"/><ellipse cx="27" cy="62" rx="7.500" ry="5.800" fill="#050507" transform="rotate(-52 27 62)"/><path d="M23.500 60 C24.500 57 26.500 55.500 28.500 55.500" stroke="#7a6656" stroke-width="1.300" fill="none"/><circle cx="38" cy="44" r="0.700" fill="#8c8c8c"/><circle cx="47" cy="38" r="0.600" fill="#7c7c7c"/><circle cx="52" cy="47" r="0.600" fill="#777"/><circle cx="44" cy="30" r="0.600" fill="#777"/><circle cx="58" cy="30" r="0.600" fill="#6c6c6c"/><circle cx="41" cy="63" r="0.600" fill="#666"/><circle cx="62" cy="50" r="0.600" fill="#707070"/><circle cx="34" cy="26" r="0.500" fill="#6a6a6a"/></g></svg></div>
<div class="ex" style="left:1264px"><svg viewBox="0 0 92 92"><defs><linearGradient id="obg" x1="0" y1="0" x2="1" y2="1"><stop offset="0" stop-color="#858585"/><stop offset="0.6" stop-color="#909090"/><stop offset="1" stop-color="#8e8e8e"/></linearGradient><linearGradient id="org" x1="0" y1="0" x2="1" y2="0"><stop offset="0" stop-color="#8f461b"/><stop offset="0.45" stop-color="#a85620"/><stop offset="1" stop-color="#94491b"/></linearGradient><filter id="b4"><feGaussianBlur stdDeviation="0.45"/></filter><filter id="b4s"><feGaussianBlur stdDeviation="1.800"/></filter></defs><rect width="92" height="92" fill="url(#obg)"/><path d="M0 83 L92 81 L92 92 L0 92 Z" fill="#868686" filter="url(#b4s)"/><ellipse cx="42" cy="81.500" rx="11" ry="2.200" fill="#776a66" filter="url(#b4s)"/><g filter="url(#b4)" transform="rotate(13 46.500 50)"><path d="M39 17 L55 17 L55 24 C58.500 26 59 29 59 33 L59 78 C59 81 56 82 46.500 82 C37 82 34.500 81 34.500 78 L34.500 33 C34.500 29 35.500 26 39 24 Z" fill="url(#org)"/><path d="M39 18 L55 18 M39 20.500 L55 20.500 M39 23 L55 23" stroke="#b0602a" stroke-width="0.800"/><text transform="translate(42.300 31.500) rotate(90)" font-family="Liberation Sans, sans-serif" font-size="12.500" font-weight="700" fill="#cfc5bc" textLength="28" lengthAdjust="spacingAndGlyphs">DRINK</text><text x="46.500" y="67.500" font-family="Liberation Sans, sans-serif" font-size="3.600" font-weight="700" fill="#c9b8aa" text-anchor="middle" letter-spacing="0.800">PRO</text></g></svg></div>
<div class="ex" style="left:1376px"><svg viewBox="0 0 92 92"><defs><linearGradient id="ubg" x1="0" y1="0" x2="1" y2="1"><stop offset="0" stop-color="#6c6c6c"/><stop offset="0.5" stop-color="#707070"/><stop offset="1" stop-color="#7b7b7b"/></linearGradient><linearGradient id="cupg" x1="0" y1="0" x2="1" y2="0"><stop offset="0" stop-color="#7a7a7a"/><stop offset="0.4" stop-color="#8d8d8d"/><stop offset="0.8" stop-color="#808080"/><stop offset="1" stop-color="#727272"/></linearGradient><filter id="b5"><feGaussianBlur stdDeviation="0.5"/></filter></defs><rect width="92" height="92" fill="url(#ubg)"/><g filter="url(#b5)"><g transform="translate(-6 3.500) rotate(15 40 58)"><path d="M23.500 29.500 L62.500 29.500 L54.500 80 C54 84 29.500 84 28.500 80 Z" fill="url(#cupg)"/><ellipse cx="43" cy="29.500" rx="19.500" ry="3.400" fill="#8f8f8f"/><path d="M23.500 29.500 C28 33.500 58 33.500 62.500 29.500 L62.200 31.500 C56 35.500 30 35.500 23.800 31.500 Z" fill="#7c7c7c"/></g><g transform="rotate(10 56 16)"><ellipse cx="56" cy="21" rx="20.500" ry="7.500" fill="#7c7c7c"/><ellipse cx="56" cy="18.500" rx="20.300" ry="7.300" fill="#8c8c8c"/><path d="M40.500 16 L71.500 16 L71.500 10 C71.500 5 40.500 5 40.500 10 Z" fill="#878787"/><ellipse cx="56" cy="9.500" rx="15.500" ry="5" fill="#939393"/><ellipse cx="56" cy="10" rx="12.500" ry="3.800" fill="#868686"/></g></g></svg></div>
<div class="ex" style="left:1488px"><svg viewBox="0 0 92 92"><defs><filter id="b6"><feGaussianBlur stdDeviation="0.35"/></filter></defs><rect width="92" height="92" fill="#8b8b8b"/><g filter="url(#b6)" stroke-linecap="round"><path d="M50 58 C50 75 62 88 92 90" stroke="#141414" stroke-width="0.700" fill="none"/><path d="M29 4 L36 5.500 L35 13 C37 18 37 25 35 33.500 L14.500 27 C17 20 22 16 27.500 13 Z" fill="#161617"/><path d="M14.500 27 L35 33.500" stroke="#8b6a4a" stroke-width="1"/><path d="M36 13.500 L77 28" stroke="#141414" stroke-width="1.400" fill="none"/><circle cx="78" cy="29.500" r="3.600" stroke="#141414" stroke-width="1.100" fill="none"/><path d="M77 31 L40 60 M79.500 32.500 L43 62" stroke="#141414" stroke-width="1.300" fill="none"/><path d="M41 59 L37 64 L40 74 L40.500 84" stroke="#141414" stroke-width="1.800" fill="none"/><path d="M25 87 C25 84 33 82.500 40 82.500 C47 82.500 53 84 53 87 C53 89.500 46 90 39 90 C32 90 25 89.500 25 87 Z" fill="#1a1a1b" stroke="none"/></g></svg></div>

<!-- footer -->
<div class="t" style="left:1371px;top:985px;color:#a1a1a1;letter-spacing:0.93px;-webkit-text-stroke:0.45px #a1a1a1">Cancel</div>
<div id="prev"></div>
<svg class="abs" style="left:1554px;top:988px;width:32px;height:32px" viewBox="0 0 24 24" fill="none" stroke="#0a0a0a" stroke-width="2" stroke-linecap="round" stroke-linejoin="round"><path d="m21.64 3.64-1.28-1.28a1.21 1.21 0 0 0-1.72 0L2.36 18.64a1.21 1.21 0 0 0 0 1.72l1.28 1.28a1.2 1.2 0 0 0 1.72 0L21.64 5.36a1.2 1.2 0 0 0 0-1.72"/><path d="m14 7 3 3"/><path d="M5 6v4"/><path d="M19 14v4"/><path d="M10 2v2"/><path d="M7 8H3"/><path d="M21 16h-4"/><path d="M11 3H9"/></svg>
<div class="t" style="left:1602px;top:985px;color:#0a0a0a;letter-spacing:0.6px;-webkit-text-stroke:0.6px #0a0a0a">Preview</div>
</body>
</html>
